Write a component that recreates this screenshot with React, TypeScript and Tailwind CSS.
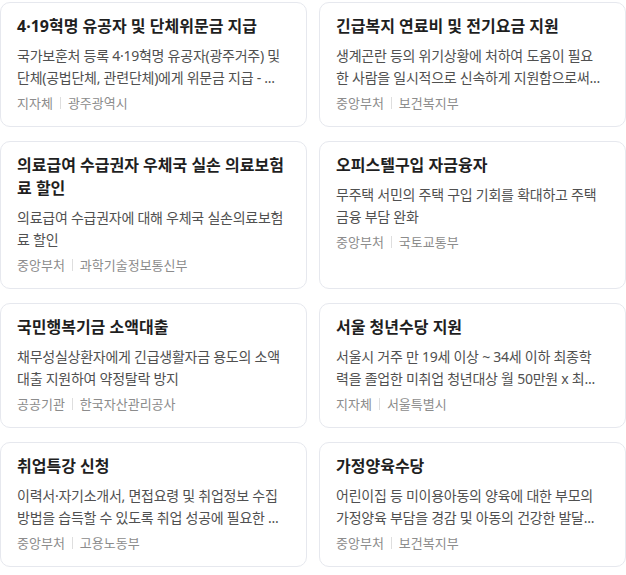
const cards = [
  {
    title: "4·19혁명 유공자 및 단체위문금 지급",
    desc: "국가보훈처 등록 4·19혁명 유공자(광주거주) 및\n단체(공법단체, 관련단체)에게 위문금 지급 - ...",
    kind: "지자체",
    org: "광주광역시",
  },
  {
    title: "긴급복지 연료비 및 전기요금 지원",
    desc: "생계곤란 등의 위기상황에 처하여 도움이 필요\n한 사람을 일시적으로 신속하게 지원함으로써...",
    kind: "중앙부처",
    org: "보건복지부",
  },
  {
    title: "의료급여 수급권자 우체국 실손 의료보험\n료 할인",
    desc: "의료급여 수급권자에 대해 우체국 실손의료보험\n료 할인",
    kind: "중앙부처",
    org: "과학기술정보통신부",
  },
  {
    title: "오피스텔구입 자금융자",
    desc: "무주택 서민의 주택 구입 기회를 확대하고 주택\n금융 부담 완화",
    kind: "중앙부처",
    org: "국토교통부",
  },
  {
    title: "국민행복기금 소액대출",
    desc: "채무성실상환자에게 긴급생활자금 용도의 소액\n대출 지원하여 약정탈락 방지",
    kind: "공공기관",
    org: "한국자산관리공사",
  },
  {
    title: "서울 청년수당 지원",
    desc: "서울시 거주 만 19세 이상 ~ 34세 이하 최종학\n력을 졸업한 미취업 청년대상 월 50만원 x 최...",
    kind: "지자체",
    org: "서울특별시",
  },
  {
    title: "취업특강 신청",
    desc: "이력서·자기소개서, 면접요령 및 취업정보 수집\n방법을 습득할 수 있도록 취업 성공에 필요한 ...",
    kind: "중앙부처",
    org: "고용노동부",
  },
  {
    title: "가정양육수당",
    desc: "어린이집 등 미이용아동의 양육에 대한 부모의\n가정양육 부담을 경감 및 아동의 건강한 발달...",
    kind: "중앙부처",
    org: "보건복지부",
  },
]

const App = () => {
  return (
    <div className="min-h-screen bg-white font-['Noto_Sans','Noto_Sans_CJK_KR',sans-serif]">
      <div className="grid grid-cols-2 gap-x-3 gap-y-[14px] pt-[2px]">
        {cards.map((card) => (
          <div
            key={card.title}
            className="rounded-[10px] border border-[#e6e8ee] bg-white px-4 pt-3 pb-[13px]"
          >
            <h3 className="whitespace-pre-line text-[16px] font-bold leading-[23px] text-[#1f1f1f]">
              {card.title}
            </h3>
            <p className="mt-[7px] whitespace-pre-line text-[14px] leading-[22px] tracking-[-0.25px] text-[#505050]">
              {card.desc}
            </p>
            <div className="mt-1 flex items-center text-[13px] leading-5 text-[#8c8c8c]">
              <span>{card.kind}</span>
              <span className="mx-[7px] h-3 w-px bg-[#dedede]" />
              <span>{card.org}</span>
            </div>
          </div>
        ))}
      </div>
    </div>
  )
}

export default App
